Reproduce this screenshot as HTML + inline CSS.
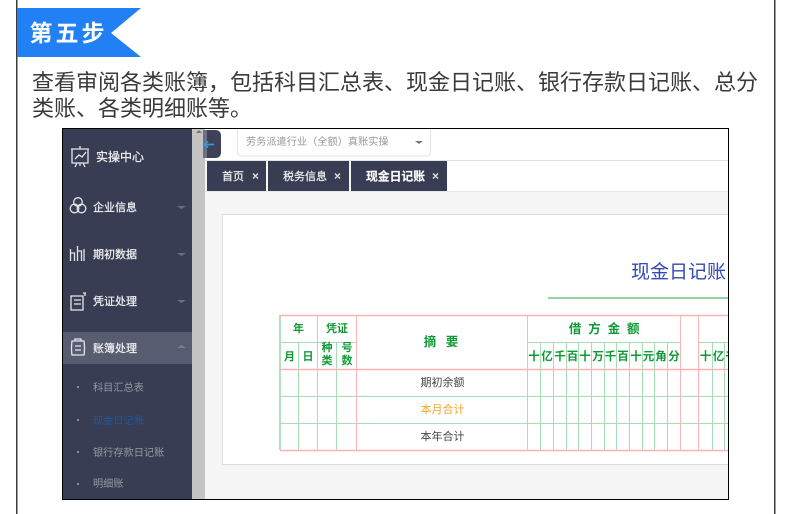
<!DOCTYPE html>
<html><head><meta charset="utf-8">
<style>
html,body{margin:0;padding:0;background:#fff;width:790px;height:514px;overflow:hidden}
svg{display:block}
text{font-family:"Liberation Sans","Noto Sans CJK SC",sans-serif}
</style></head><body>
<svg width="790" height="514" viewBox="0 0 790 514" xmlns="http://www.w3.org/2000/svg">
<defs><filter id="b" x="0" y="0" width="100%" height="100%"><feGaussianBlur stdDeviation="0.35"/></filter></defs>
<rect width="790" height="514" fill="#fff"/>
<rect x="16" y="0" width="1.5" height="514" fill="#3c3c3c"/>
<rect x="774" y="0" width="1.5" height="514" fill="#3c3c3c"/>
<polygon points="17,8 141,8 111,33 141,57 17,57" fill="#2080f4"/>
<text x="29.500" y="41" font-size="23" font-weight="700" fill="#fff" letter-spacing="3">第五步</text>
<text x="32" y="90" font-size="22" fill="#3a3a3a">查看审阅各类账簿，包括科目汇总表、现金日记账、银行存款日记账、总分</text>
<text x="32" y="116" font-size="22" fill="#3a3a3a">类账、各类明细账等。</text>

<!-- screenshot frame -->
<rect x="62" y="128" width="667" height="372" fill="#000"/>
<svg x="63" y="129" width="665" height="370" viewBox="63 129 665 370">
<g filter="url(#b)">
<rect x="63" y="129" width="665" height="370" fill="#f5f5f5"/>
<rect x="63" y="129" width="129" height="370" fill="#393e52"/>
<rect x="192" y="129" width="13" height="370" fill="#c4c4c4"/>
<rect x="205" y="129" width="523" height="32" fill="#fff"/>
<rect x="205" y="160" width="523" height="1" fill="#e2e2e2"/>
<rect x="447" y="161" width="281" height="30" fill="#fff"/>
<rect x="205" y="191" width="523" height="1" fill="#e8e8e8"/>
<polygon points="196,133 202,133 199,130" fill="#777"/>

<!-- sidebar -->
<rect x="63" y="332" width="129" height="32" fill="#585c70"/>
<g fill="none" stroke="#e4e5ea" stroke-width="1.3">
<path d="M71 149h18M72 149v14h16v-14M75 159l4-4 3 2 4-5M80 146v3M75 167l2-4M85 167l-2-4M80 163v3"/>
<circle cx="78" cy="202" r="4.300"/><circle cx="74.500" cy="208.500" r="4.300"/><circle cx="81.500" cy="208.500" r="4.300"/>
<path d="M70.500 261v-12M70.500 253h4v8M77.500 261v-15M77.500 251h4v10M84 261v-12"/>
<path d="M71 296h12v14H71zM74 300h7M74 304h7M85 293v3M83 293h3"/>
<path d="M72 341q-1 8 0 14h12q1-6 0-14zM75 341v-2h6v2M75 346h6M75 350h6"/>
</g>
<g font-size="11" fill="#f2f3f4" stroke="#f2f3f4" stroke-width="0.2">
<text x="96" y="161" font-size="12">实操中心</text>
<text x="93" y="211">企业信息</text>
<text x="93" y="258">期初数据</text>
<text x="93" y="305">凭证处理</text>
<text x="93" y="352">账簿处理</text>
</g>
<g fill="#6a6e7f">
<polygon points="177,206 186,206 181.500,209"/>
<polygon points="177,253 186,253 181.500,256"/>
<polygon points="177,300 186,300 181.500,303"/>
</g>
<polygon points="177,348 186,348 181.500,345" fill="#797d8e"/>
<g fill="#8a8e9c">
<rect x="77" y="386" width="2" height="2"/><rect x="77" y="419" width="2" height="2"/>
<rect x="77" y="451" width="2" height="2"/><rect x="77" y="483" width="2" height="2"/>
</g>
<g font-size="10.200" fill="#9498a6">
<text x="93" y="391">科目汇总表</text>
<text x="93" y="424" fill="#1f5a9c">现金日记账</text>
<text x="93" y="456">银行存款日记账</text>
<text x="93" y="487">明细账</text>
</g>

<!-- top select -->
<rect x="237.500" y="124" width="193" height="32" rx="4" fill="#fff" stroke="#e4e4e4"/>
<text x="246" y="145" font-size="10.200" fill="#9a9a9a">劳务派遣行业（全额）真账实操</text>
<polygon points="415,141 423,141 419,144" fill="#777"/>

<!-- collapse button -->
<path d="M203 130h12q6 0 6 6v16q0 6-6 6h-12z" fill="#3d4259"/>
<rect x="203" y="130" width="4" height="28" fill="#6d7187"/>
<path d="M205 144.500h9M208 141.500l-3.500 3 3.500 3" stroke="#2e9be0" stroke-width="1.800" fill="none"/>

<!-- tabs -->
<rect x="207" y="161" width="59" height="30" fill="#393e52"/>
<rect x="268" y="161" width="81" height="30" fill="#393e52"/>
<rect x="351" y="161" width="96" height="30" fill="#393e52"/>
<g font-size="11" fill="#eeeff1" stroke="#eeeff1" stroke-width="0.2">
<text x="222" y="180">首页</text>
<text x="283" y="180">税务信息</text>
<text x="366" y="180.500" font-size="11.800" font-weight="700" fill="#fff">现金日记账</text>
</g>
<g stroke="#e6e7ea" stroke-width="1.300">
<path d="M253 173.500l5 5M258 173.500l-5 5M335 173.500l5 5M340 173.500l-5 5M433 173.500l5 5M438 173.500l-5 5"/>
</g>

<!-- card -->
<rect x="222.500" y="214.500" width="520" height="250" fill="#fff" stroke="#dcdcdc"/>
<text x="631" y="278" font-size="19" fill="#3348b8">现金日记账</text>
<rect x="548" y="297" width="181" height="2" fill="#93d6a4"/>

<!-- ledger: green lines -->
<g stroke="#a8dcb4" stroke-width="1">
<path d="M280 342.500h77M298.500 342v108M336.500 342v108"/>
<path d="M528 342.500h152M699 342.500h30"/>
<path d="M280 396.500h449M280 423.500h449"/>
<path d="M540.500 342v108M553.500 342v108M566.500 342v108M578.500 342v108M591.500 342v108M604.500 342v108M616.500 342v108M629.500 342v108M642.500 342v108M654.500 342v108M667.500 342v108M712.500 342v108M724.500 342v108"/>
</g>
<rect x="279" y="315" width="2" height="135" fill="#b2dfbc"/>
<!-- pink lines -->
<g stroke="#fcb4b4" stroke-width="1">
<path d="M280 315.500h449M280 369.500h449M280 450.500h449" stroke-width="1.400"/>
<path d="M317.500 315v135M356.500 315v135M527.500 315v135M680.500 315v135M698.500 315v135"/>
</g>
<g fill="#0f9a35" font-weight="700" text-anchor="middle">
<g font-size="11">
<text x="298.500" y="332">年</text>
<text x="337" y="332">凭证</text>
<text x="289.500" y="360">月</text>
<text x="308" y="360">日</text>
<text x="327" y="351">种</text><text x="327" y="364">类</text>
<text x="347" y="351">号</text><text x="347" y="364">数</text>
</g>
<text x="442.500" y="346" font-size="12.500" letter-spacing="3">摘 要</text>
<text x="605" y="333" font-size="12.500" letter-spacing="1.700">借 方 金 额</text>
<g font-size="11.500">
<text x="534" y="360">十</text><text x="547" y="360">亿</text><text x="560" y="360">千</text><text x="572.500" y="360">百</text><text x="585" y="360">十</text><text x="598" y="360">万</text><text x="610.500" y="360">千</text><text x="623" y="360">百</text><text x="636" y="360">十</text><text x="648.500" y="360">元</text><text x="661" y="360">角</text><text x="674" y="360">分</text><text x="705.500" y="360">十</text><text x="718.500" y="360">亿</text><text x="731" y="360">千</text>
</g>
</g>
<g font-size="11" text-anchor="middle">
<text x="442.500" y="386" fill="#444">期初余额</text>
<text x="442.500" y="413" fill="#f5a623">本月合计</text>
<text x="442.500" y="440" fill="#444">本年合计</text>
</g>
</g>
</svg>
</svg>
</body></html>
